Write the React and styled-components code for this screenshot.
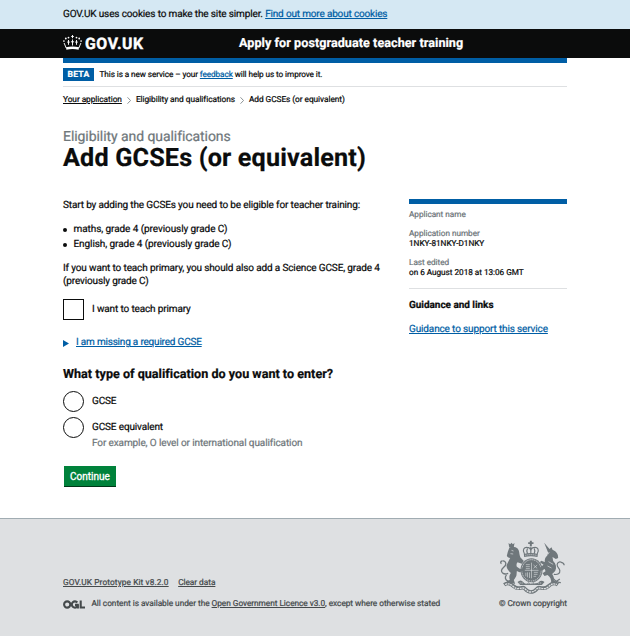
import React from "react";
import styled, { createGlobalStyle } from "styled-components";

const Global = createGlobalStyle`
  *, *::before, *::after { box-sizing: border-box; }
  body { margin: 0; background: #fff; }
  h1, h2, p, ul, dl, dd, dt { margin: 0; padding: 0; font-weight: 400; }
`;

const color = {
  text: "#0b0c0c",
  grey: "#6f777b",
  blue: "#005ea5",
  line: "#dee0e2",
  footer: "#454a4c",
};

const Page = styled.div`
  display: flex;
  flex-direction: column;
  height: 636px;
  overflow: hidden;
  font-family: Roboto, "Liberation Sans", sans-serif;
  font-size: 10px;
  line-height: 13px;
  letter-spacing: -0.14px;
  text-rendering: geometricPrecision;
  -webkit-text-stroke: 0.22px;
  color: ${color.text};
`;

const Container = styled.div`
  width: 504px;
  margin: 0 auto;
`;

const Link = styled.a`
  color: ${(p) => p.$color || color.blue};
  text-decoration: underline;
  text-decoration-thickness: 1px;
  text-underline-offset: 1px;
  letter-spacing: ${(p) => p.$spacing || "inherit"};
  cursor: pointer;
`;

const CookieBar = styled.div`
  height: 29px;
  padding-top: 8px;
  background: #d5e8f3;
`;

const Header = styled.header`
  height: 29px;
  background: ${color.text};
  color: #fff;
`;

const HeaderRow = styled(Container)`
  display: flex;
  align-items: center;
  height: 28px;
`;

const Brand = styled.a`
  display: flex;
  align-items: center;
  width: 176px;
  font-size: 15.8px;
  font-weight: 700;
  letter-spacing: 0.6px;
  -webkit-text-stroke: 0.4px;
`;

const CrownIcon = styled.svg`
  width: 19px;
  height: 15px;
  margin: 0 3px 2px 0;
`;

const ServiceName = styled.span`
  font-size: 12.6px;
  font-weight: 700;
  letter-spacing: 0.05px;
`;

const BlueBar = styled.div`
  height: 5px;
  background: ${color.blue};
`;

const PhaseBanner = styled.div`
  display: flex;
  align-items: center;
  height: 24px;
  border-bottom: 1px solid ${color.line};
  font-size: 8.2px;
  letter-spacing: -0.08px;
`;

const PhaseTag = styled.strong`
  width: 31px;
  height: 13px;
  margin-right: 5.5px;
  background: ${color.blue};
  color: #fff;
  font-size: 8.6px;
  font-weight: 700;
  line-height: 14px;
  letter-spacing: 0.2px;
  text-align: center;
`;

const PhaseText = styled.span`
  padding-top: 2px;
`;

const Breadcrumbs = styled.nav`
  display: flex;
  align-items: center;
  height: 13px;
  margin-top: 7px;
  font-size: 8.3px;
  letter-spacing: -0.05px;
`;

const Chevron = styled.svg`
  width: 4px;
  height: 7px;
  margin: 0 5px;
`;

const Caption = styled.p`
  margin-top: 22px;
  color: ${color.grey};
  font-size: 14px;
  line-height: 16px;
  letter-spacing: -0.07px;
`;

const Title = styled.h1`
  height: 27px;
  font-size: 25.2px;
  font-weight: 700;
  line-height: 28px;
  letter-spacing: 0.16px;
`;

const Columns = styled.main`
  display: flex;
  justify-content: space-between;
  height: 346px;
  padding-top: 27px;
`;

const Form = styled.div`
  width: 330px;
`;

const Bullets = styled.ul`
  margin: 10px 0 10px;
  list-style: none;
  line-height: 15px;
`;

const Bullet = styled.li`
  display: flex;
  align-items: center;
  letter-spacing: -0.08px;
  &::before {
    content: "";
    width: 4px;
    height: 4px;
    margin-right: 6.5px;
    border-radius: 50%;
    background: ${color.text};
  }
`;

const Choice = styled.label`
  display: flex;
  height: 21px;
  margin-top: ${(p) => p.$gap}px;
  line-height: 22px;
  &::before {
    content: "";
    width: 21px;
    height: 21px;
    margin-right: 8px;
    border: 1.3px solid ${color.text};
    border-radius: ${(p) => (p.$round ? "50%" : "0")};
  }
`;

const Details = styled.div`
  display: flex;
  align-items: center;
  height: 13px;
  margin-top: 16px;
  letter-spacing: -0.2px;
`;

const Arrow = styled.svg`
  width: 6px;
  height: 7px;
  margin: 1px 7px 0 0;
`;

const Question = styled.h2`
  margin-top: 18px;
  font-size: 12.6px;
  font-weight: 700;
  line-height: 16px;
  letter-spacing: 0.01px;
`;

const Hint = styled.p`
  margin: -1px 0 0 29px;
  color: ${color.grey};
  letter-spacing: -0.11px;
`;

const Button = styled.button`
  display: block;
  width: 52px;
  height: 21px;
  margin: 16px 0 0 1px;
  padding: 0;
  border: 0;
  border-bottom: 1px solid #003618;
  background: #00823b;
  color: #fff;
  font: 400 10px/19px Roboto, "Liberation Sans", sans-serif;
  letter-spacing: 0;
  -webkit-text-stroke: 0.3px;
`;

const Sidebar = styled.aside`
  width: 158px;
  border-top: 5px solid ${color.blue};
`;

const Facts = styled.dl`
  height: 85px;
  padding-top: 6px;
  border-bottom: 1px solid ${color.line};
  font-size: 8.2px;
  line-height: 10.5px;
  letter-spacing: -0.02px;
`;

const Fact = styled.div`
  margin-bottom: 8px;
`;

const FactName = styled.dt`
  color: ${color.grey};
`;

const SideTitle = styled.h2`
  margin: 10px 0 11px;
  font-size: 10px;
  font-weight: 700;
  letter-spacing: -0.04px;
`;

const Footer = styled.footer`
  flex: 1;
  border-top: 1px solid #a1acb2;
  background: ${color.line};
  color: ${color.footer};
  font-size: 8.3px;
  letter-spacing: -0.04px;
`;

const FooterRow = styled(Container)`
  display: flex;
  justify-content: space-between;
  padding-top: 21px;
`;

const FooterMeta = styled.div`
  padding-top: 37px;
`;

const FooterLinks = styled.div`
  display: flex;
  gap: 9.5px;
`;

const Licence = styled.div`
  display: flex;
  align-items: center;
  margin-top: 8px;
`;

const OglLogo = styled.svg`
  width: 22px;
  height: 9px;
  margin: 0 6.5px 1px 0;
`;

const Copyright = styled.div`
  display: flex;
  flex-direction: column;
  align-items: flex-end;
`;

const CrestSvg = styled.svg`
  width: 67px;
  height: 55px;
  margin: 0 1px 3px 0;
`;

function Crown() {
  return (
    <CrownIcon viewBox="0 0 19 15" fill="#fff">
      <circle cx="5.5" cy="2.600" r=".9" />
      <circle cx="13.500" cy="2.600" r=".9" />
      <circle cx="2.800" cy="3.500" r=".9" />
      <circle cx="16.200" cy="3.500" r=".9" />
      <circle cx=".9" cy="6" r=".85" />
      <circle cx="18.100" cy="6" r=".85" />
      <path
        d="M9.500 0v3.200M8.200 1.500h2.600M9.500 4.500v6M7.900 6.800h3.200M5.500 5v4.800M4.200 7.100h2.600M13.500 5v4.800M12.200 7.100h2.600M3.200 13 1.100 8M15.800 13l2.100-5"
        fill="none" stroke="#fff" strokeWidth=".95"
      />
      <path d="M3 12.300c4-1.100 9-1.100 13 0l-.4 2.400c-4-.8-8.200-.8-12.200 0z" />
    </CrownIcon>
  );
}

function Ogl() {
  return (
    <OglLogo viewBox="0 0 22 9" fill="none" stroke={color.footer} strokeWidth="2.100">
      <circle cx="4.200" cy="4.500" r="3.100" />
      <path d="M14.300 2.500A3.100 3.100 0 1 0 14.300 6.500M14.900 4.200v4.200M12 4.900h3.600M17.700.4v7.100H22" />
    </OglLogo>
  );
}

function Crest() {
  return (
    <CrestSvg viewBox="60 88 200 165" fill={color.grey} stroke="none">
      <path d="M152 90h6v5h5v5h-5v7h-6v-7h-5v-5h5z" />
      <path
        d="M136 130C128 118 135 109 144 110C150 110 154 114 155 120C156 114 160 110 166 110C175 109 182 118 174 130M155 108v22M145 113c-3 5-2 11 0 16M165 113c3 5 2 11 0 16"
        fill="none" stroke={color.grey} strokeWidth="3.500"
      />
      <path d="M134 130q21-6 42 0l-1 9q-20-5-40 0z" />
      <path d="M138 134q17-4 34 0" fill="none" stroke="#dee0e2" strokeWidth="2" strokeDasharray="4 2" />
      <ellipse cx="157" cy="179" rx="33" ry="36" />
      <ellipse cx="157" cy="179" rx="29" ry="32" fill="none" stroke="#dee0e2" strokeWidth="2.500" strokeDasharray="4 2.500" />
      <path
        d="M157 156v47M137 179h41M140 162h12M140 168h12M140 174h12M164 185h12M164 191h11M163 197h8M163 163l11 10M174 163l-11 10M140 186v11M145 185v15M151 185v17"
        fill="none" stroke="#dee0e2" strokeWidth="1.800"
      />
      <path d="M88 97l5 4 4-5 4 5 5-4-2 12H90z" />
      <path d="M91 110c8-4 20-2 25 4 5 7 4 14 6 21 1 7 6 8 12 16l-6 8-13-4c-3 4-4 8-2 13l10 7 12-4-2 10-12 4-8-4-1 13c-2 6-5 10-8 14l4 12-8-2-9 3-10-4 3-7 8-2c-3-8-1-16 3-21-8-7-13-14-13-23l11-22c-5 0-8-3-10-7l3-12z" />
      <path d="M97 119l6 2M94 129l8 1" stroke="#dee0e2" strokeWidth="2" />
      <path
        d="M87 188c-13 5-21-1-20-9 2-9 13-10 13-20 0-6-5-9-10-8M69 151c-5 0-6 6-2 8M82 193c-6 6-4 15 4 18"
        fill="none" stroke={color.grey} strokeWidth="4"
      />
      <path d="M195 96l16 19 6-5 3 7c8 3 13 8 16 16l1 9-7 3-10-6 2 12c9 9 11 20 6 30l-9 9c5 7 6 13 5 19l9 5-4 8-13-5c1-11-3-18-11-24l-9 3-6-8 9-6-2-7-12 6-7-6 15-13-11-7 4-5 11 4c-1-8 1-14 7-19l3-9z" />
      <path d="M210 124l-3 7M208 153l14 8M205 166l12 6" stroke="#dee0e2" strokeWidth="2" fill="none" />
      <path
        d="M224 191c12 2 19-3 18-11-1-8-9-10-8-19 1-6 7-9 13-6M246 155c6 1 9 5 9 9M222 203c8 10 15 13 23 13M230 213l12-8"
        fill="none" stroke={color.grey} strokeWidth="3.500"
      />
      <path
        d="M75 222c11-8 20-4 29 5 10 10 18 4 28 4 7 0 7 13 23 13s17-13 24-13c10 0 18 6 28-4 9-9 18-13 29-5"
        fill="none" stroke={color.grey} strokeWidth="11"
      />
      <path
        d="M78 222c10-5 17-2 25 6 10 10 19 4 29 4 8 0 8 12 23 12s16-12 24-12c10 0 19 6 29-4 8-8 16-11 25-6"
        fill="none" stroke="#dee0e2" strokeWidth="4" strokeDasharray="6 2"
      />
      <path d="M115 214q10-9 17 0t17 1q6 7 13 0 10 6 17-1t17 0l-8 9h-65z" />
      <path d="M121 217h12M139 219h31M176 217h12" stroke="#dee0e2" strokeWidth="2" strokeDasharray="4 2" />
    </CrestSvg>
  );
}

const Crumb = () => (
  <Chevron viewBox="0 0 4 7" fill="none" stroke={color.grey} strokeWidth=".8">
    <path d="M.5.3 3.500 3.500.5 6.700" />
  </Chevron>
);

export default function App() {
  return (
    <Page>
      <Global />
      <CookieBar>
        <Container>
          GOV.UK uses cookies to make the site simpler. <Link $spacing="-0.17px">Find out more about cookies</Link>
        </Container>
      </CookieBar>
      <Header>
        <HeaderRow>
          <Brand>
            <Crown />
            GOV.UK
          </Brand>
          <ServiceName>Apply for postgraduate teacher training</ServiceName>
        </HeaderRow>
      </Header>
      <Container>
        <BlueBar />
        <PhaseBanner>
          <PhaseTag>BETA</PhaseTag>
          <PhaseText>
            This is a new service – your <Link>feedback</Link> will help us to improve it.
          </PhaseText>
        </PhaseBanner>
        <Breadcrumbs>
          <Link $color={color.text}>Your application</Link>
          <Crumb />
          <span>Eligibility and qualifications</span>
          <Crumb />
          <span>Add GCSEs (or equivalent)</span>
        </Breadcrumbs>
        <Caption>Eligibility and qualifications</Caption>
        <Title>Add GCSEs (or equivalent)</Title>
        <Columns>
          <Form>
            <p>Start by adding the GCSEs you need to be eligible for teacher training:</p>
            <Bullets>
              <Bullet>maths, grade 4 (previously grade C)</Bullet>
              <Bullet>English, grade 4 (previously grade C)</Bullet>
            </Bullets>
            <p>If you want to teach primary, you should also add a Science GCSE, grade 4 (previously grade C)</p>
            <Choice $gap={11}>I want to teach primary</Choice>
            <Details>
              <Arrow viewBox="0 0 6 7" fill={color.blue}>
                <path d="M0 0l6 3.500L0 7z" />
              </Arrow>
              <Link>I am missing a required GCSE</Link>
            </Details>
            <Question>What type of qualification do you want to enter?</Question>
            <Choice $round $gap={8}>GCSE</Choice>
            <Choice $round $gap={5}>GCSE equivalent</Choice>
            <Hint>For example, O level or international qualification</Hint>
            <Button>Continue</Button>
          </Form>
          <Sidebar>
            <Facts>
              <Fact>
                <FactName>Applicant name</FactName>
              </Fact>
              <Fact>
                <FactName>Application number</FactName>
                <dd>1NKY-81NKY-D1NKY</dd>
              </Fact>
              <Fact>
                <FactName>Last edited</FactName>
                <dd>on 6 August 2018 at 13:06 GMT</dd>
              </Fact>
            </Facts>
            <SideTitle>Guidance and links</SideTitle>
            <Link>Guidance to support this service</Link>
          </Sidebar>
        </Columns>
      </Container>
      <Footer>
        <FooterRow>
          <FooterMeta>
            <FooterLinks>
              <Link $color={color.footer} $spacing="0.11px">GOV.UK Prototype Kit v8.2.0</Link>
              <Link $color={color.footer}>Clear data</Link>
            </FooterLinks>
            <Licence>
              <Ogl />
              <span>
                All content is available under the{" "}
                <Link $color={color.footer}>Open Government Licence v3.0</Link>, except where otherwise stated
              </span>
            </Licence>
          </FooterMeta>
          <Copyright>
            <Crest />
            <span>© Crown copyright</span>
          </Copyright>
        </FooterRow>
      </Footer>
    </Page>
  );
}
